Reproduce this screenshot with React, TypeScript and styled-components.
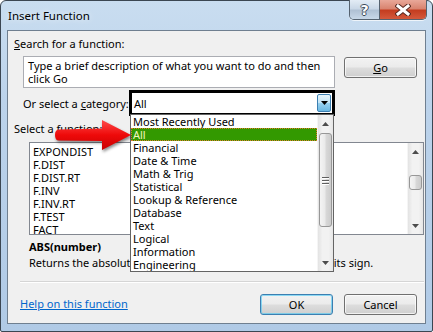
import React from 'react';
import styled, { createGlobalStyle } from 'styled-components';

const UI_FONT = `'Noto Sans', 'Open Sans', sans-serif`;

const GlobalStyle = createGlobalStyle`
  html, body { margin: 0; padding: 0; background: #ffffff; }
  body { font-family: ${UI_FONT}; font-size: 11px; color: #000; }
  * { box-sizing: border-box; }
`;

const Window = styled.div`
  position: relative;
  width: 433px;
  height: 332px;
  border: 1px solid #3b4652;
  border-radius: 6px 6px 2px 2px;
  background: linear-gradient(180deg, #c9ddf0 0%, #bcd3eb 30%, #b0cae6 100%);
  display: flex;
  flex-direction: column;
  padding: 0 6px 7px 6px;
`;

const TitleBar = styled.div`
  height: 29px;
  display: flex;
  justify-content: space-between;
  align-items: flex-start;
`;

const TitleText = styled.div`
  padding: 8px 0 0 1px;
  font-size: 11.5px;
  line-height: 14px;
  color: #000;
  text-shadow: 0 0 6px rgba(255, 255, 255, 0.9);
`;

const CaptionGroup = styled.div`
  display: flex;
  height: 20px;
  margin: -1px -1px 0 0;
  border: 1px solid #55626f;
  border-top: none;
  border-radius: 0 0 5px 5px;
  overflow: hidden;
  box-shadow: 0 1px 0 rgba(255, 255, 255, 0.7);
`;

const CaptionButton = styled.div<{ $close?: boolean }>`
  width: ${p => (p.$close ? 47 : 29)}px;
  display: flex;
  align-items: center;
  justify-content: center;
  background: ${p =>
    p.$close
      ? 'linear-gradient(180deg, #e9a899 0%, #d98470 45%, #c43d20 55%, #d4593c 100%)'
      : 'linear-gradient(180deg, #e3ecf5 0%, #cad8e7 45%, #b0c1d4 55%, #c8d8e8 100%)'};
  & + & {
    border-left: 1px solid #55626f;
  }
`;

const HelpGlyph = styled.span`
  font-family: 'DejaVu Sans', sans-serif;
  font-weight: bold;
  font-size: 14px;
  line-height: 14px;
  color: #ffffff;
  text-shadow: -1px 0 #3d4a58, 1px 0 #3d4a58, 0 -1px #3d4a58, 0 1px #3d4a58;
`;

const Client = styled.div`
  position: relative;
  flex: 1;
  border: 1px solid #6f7f90;
  background: #f0f0f0;
  display: flex;
  flex-direction: column;
  padding: 0 7px 0 6px;
`;

const Label = styled.div<{ $indent?: number; $top?: number; $bold?: boolean }>`
  margin: ${p => p.$top ?? 0}px 0 0 ${p => p.$indent ?? 0}px;
  height: 14px;
  line-height: 14px;
  white-space: nowrap;
  font-weight: ${p => (p.$bold ? 'bold' : 'normal')};
  color: #000;
`;

const SearchRow = styled.div`
  margin: 5px 0 0 9px;
  display: flex;
  align-items: flex-start;
  gap: 9px;
`;

const DescBox = styled.div`
  width: 312px;
  height: 32px;
  border: 1px solid #abadb3;
  background: #ffffff;
  padding: 2px 0 0 4px;
  line-height: 13px;
  color: #000;
  white-space: nowrap;
`;

const PushButton = styled.div<{ $default?: boolean; $top?: number }>`
  width: 73px;
  height: 21px;
  margin-top: ${p => p.$top ?? 0}px;
  border: 1px solid ${p => (p.$default ? '#3c7fb1' : '#707070')};
  border-radius: 3px;
  background: linear-gradient(180deg, #f2f2f2 0%, #ebebeb 48%, #dddddd 52%, #cfcfcf 100%);
  box-shadow: inset 0 0 0 1px ${p => (p.$default ? 'rgba(72, 200, 245, 0.6)' : 'rgba(255, 255, 255, 0.7)')};
  display: flex;
  align-items: center;
  justify-content: center;
  color: #000;
`;

const CategoryRow = styled.div`
  margin: 2px 0 0 9px;
  display: flex;
  align-items: center;
  height: 26px;
`;

const CategoryLabel = styled.div`
  width: 106px;
  white-space: nowrap;
`;

const SelectBox = styled.div`
  position: relative;
  width: 206px;
  height: 26px;
  border: 3px solid #000;
  background: #ffffff;
  display: flex;
  align-items: center;
  justify-content: space-between;
  padding: 0 0 0 2px;
`;

const DropButton = styled.div`
  width: 14px;
  height: 18px;
  margin-right: 1px;
  border: 1px solid #3c7fb1;
  border-radius: 2px;
  background: linear-gradient(180deg, #e5f4fc 0%, #c4e5f6 48%, #98d1ef 52%, #6ab8e3 100%);
  display: flex;
  align-items: center;
  justify-content: center;
`;

const DropList = styled.div`
  position: absolute;
  top: 21px;
  left: -2px;
  width: 204px;
  height: 158px;
  border: 1px solid #646464;
  background: #ffffff;
  display: flex;
  z-index: 2;
`;

const ItemColumn = styled.div<{ $padTop?: number; $padLeft?: number }>`
  flex: 1;
  display: flex;
  flex-direction: column;
  padding: ${p => p.$padTop ?? 0}px 0 0 ${p => p.$padLeft ?? 0}px;
  overflow: hidden;
`;

const ListItem = styled.div<{ $selected?: boolean; $pad?: number }>`
  height: 13px;
  line-height: 13px;
  padding-left: ${p => p.$pad ?? 2}px;
  white-space: nowrap;
  color: ${p => (p.$selected ? '#f2f5c0' : '#000')};
  background: ${p => (p.$selected ? '#339900' : 'transparent')};
  outline: ${p => (p.$selected ? '1px dotted #e07a2a' : 'none')};
  outline-offset: -1px;
`;

const ScrollBar = styled.div`
  width: 16px;
  display: flex;
  flex-direction: column;
  background: linear-gradient(90deg, #e3e3e3 0%, #f2f2f2 30%, #f2f2f2 70%, #e6e6e6 100%);
  border-left: 1px solid #f5f5f5;
`;

const ScrollArrow = styled.div`
  height: 17px;
  display: flex;
  align-items: center;
  justify-content: center;
`;

const ScrollGap = styled.div<{ $h?: number }>`
  height: ${p => (p.$h === undefined ? 'auto' : `${p.$h}px`)};
  flex: ${p => (p.$h === undefined ? 1 : 'none')};
`;

const Thumb = styled.div<{ $h: number }>`
  height: ${p => p.$h}px;
  margin: 0 1px;
  border: 1px solid #979797;
  border-radius: 3px;
  background: linear-gradient(90deg, #f4f4f4 0%, #eaeaea 45%, #d8d8d8 55%, #cccccc 100%);
  display: flex;
  flex-direction: column;
  align-items: center;
  justify-content: center;
  gap: 2px;
`;

const Grip = styled.div`
  width: 7px;
  height: 1px;
  background: #5f5f5f;
  box-shadow: 0 1px 0 #ffffff;
`;

const FunctionList = styled.div`
  margin: 6px 0 0 15px;
  width: 395px;
  height: 93px;
  border: 1px solid #828790;
  background: #ffffff;
  display: flex;
`;

const Separator = styled.div`
  margin: 11px 0 0 6px;
  width: 404px;
  height: 2px;
  border-top: 1px solid #d5d5d5;
  border-bottom: 1px solid #ffffff;
`;

const BottomRow = styled.div`
  margin: 11px 0 0 6px;
  display: flex;
  align-items: center;
  justify-content: space-between;
  padding-right: 1px;
`;

const HelpLink = styled.span`
  color: #0066cc;
  text-decoration: underline;
  margin-top: -3px;
`;

const ButtonGroup = styled.div`
  display: flex;
  gap: 11px;
`;

const Arrow = styled.svg`
  position: absolute;
  left: 49px;
  top: 114px;
  z-index: 3;
  filter: drop-shadow(1px 2px 1.5px rgba(0, 0, 0, 0.45));
`;

const categories = [
  'Most Recently Used',
  'All',
  'Financial',
  'Date & Time',
  'Math & Trig',
  'Statistical',
  'Lookup & Reference',
  'Database',
  'Text',
  'Logical',
  'Information',
  'Engineering',
];

const functions = ['EXPONDIST', 'F.DIST', 'F.DIST.RT', 'F.INV', 'F.INV.RT', 'F.TEST', 'FACT'];

const Triangle = ({ up, color = '#4d4d4d' }: { up?: boolean; color?: string }) => (
  <svg width="7" height="4" viewBox="0 0 7 4">
    <path d={up ? 'M0 4 L3.5 0 L7 4 Z' : 'M0 0 L7 0 L3.5 4 Z'} fill={color} />
  </svg>
);

const Scroller = ({ offset, thumb, grip }: { offset: number; thumb: number; grip?: boolean }) => (
  <ScrollBar>
    <ScrollArrow>
      <Triangle up />
    </ScrollArrow>
    <ScrollGap $h={offset} />
    <Thumb $h={thumb}>
      {grip && (
        <>
          <Grip />
          <Grip />
          <Grip />
        </>
      )}
    </Thumb>
    <ScrollGap />
    <ScrollArrow>
      <Triangle />
    </ScrollArrow>
  </ScrollBar>
);

export default function App() {
  return (
    <>
      <GlobalStyle />
      <Window>
        <TitleBar>
          <TitleText>Insert Function</TitleText>
          <CaptionGroup>
            <CaptionButton>
              <HelpGlyph>?</HelpGlyph>
            </CaptionButton>
            <CaptionButton $close>
              <svg width="16" height="12" viewBox="0 0 16 12">
                <path d="M3 2 L13 10 M13 2 L3 10" stroke="#5a2a22" strokeWidth="5" strokeLinecap="square" />
                <path d="M3 2 L13 10 M13 2 L3 10" stroke="#ffffff" strokeWidth="3" strokeLinecap="square" />
              </svg>
            </CaptionButton>
          </CaptionGroup>
        </TitleBar>
        <Client>
          <Label $top={6}>
            <u>S</u>earch for a function:
          </Label>
          <SearchRow>
            <DescBox>
              Type a brief description of what you want to do and then
              <br />
              click Go
            </DescBox>
            <PushButton $top={1}>
              <span>
                <u>G</u>o
              </span>
            </PushButton>
          </SearchRow>
          <CategoryRow>
            <CategoryLabel>
              Or select a <u>c</u>ategory:
            </CategoryLabel>
            <SelectBox>
              <span>All</span>
              <DropButton>
                <Triangle color="#000" />
              </DropButton>
              <DropList>
                <ItemColumn>
                  {categories.map(c => (
                    <ListItem key={c} $selected={c === 'All'}>
                      {c}
                    </ListItem>
                  ))}
                </ItemColumn>
                <Scroller offset={1} thumb={94} grip />
              </DropList>
            </SelectBox>
          </CategoryRow>
          <Label $top={6}>
            Select a functio<u>n</u>:
          </Label>
          <FunctionList>
            <ItemColumn $padTop={2}>
              {functions.map(f => (
                <ListItem key={f} $pad={3}>
                  {f}
                </ListItem>
              ))}
            </ItemColumn>
            <Scroller offset={15} thumb={15} />
          </FunctionList>
          <Label $indent={15} $top={5} $bold>
            ABS(number)
          </Label>
          <Label $indent={15} $top={2}>
            Returns the absolute value of a number, a number without its sign.
          </Label>
          <Separator />
          <BottomRow>
            <HelpLink>Help on this function</HelpLink>
            <ButtonGroup>
              <PushButton $default>OK</PushButton>
              <PushButton>Cancel</PushButton>
            </ButtonGroup>
          </BottomRow>
        </Client>
        <Arrow width="84" height="40" viewBox="0 0 84 40">
          <defs>
            <linearGradient id="arrowFill" x1="0" y1="0" x2="0" y2="1">
              <stop offset="0" stopColor="#ff4a4a" />
              <stop offset="0.5" stopColor="#ee0a0a" />
              <stop offset="1" stopColor="#c80000" />
            </linearGradient>
          </defs>
          <path
            d="M9 14.5 L52 13.5 L52 5 L81 20 L52 35 L52 26 L9 25.5 Q5 25.5 5 20 Q5 14.5 9 14.5 Z"
            fill="url(#arrowFill)"
          />
        </Arrow>
      </Window>
    </>
  );
}
